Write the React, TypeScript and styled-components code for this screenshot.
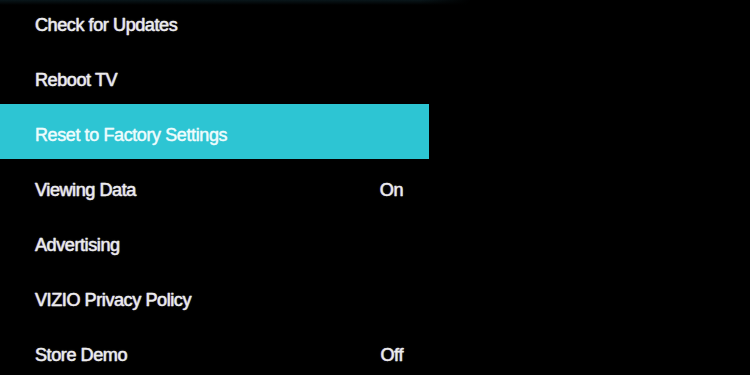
import styled, { createGlobalStyle } from 'styled-components';

const GlobalStyle = createGlobalStyle`
  html, body {
    margin: 0;
    padding: 0;
    background: #000;
  }
  body {
    width: 750px;
    height: 375px;
    overflow: hidden;
  }
`;

const Screen = styled.main`
  width: 750px;
  height: 375px;
  overflow: hidden;
  background:
    linear-gradient(90deg, rgba(0, 0, 0, 0) 0, rgba(0, 0, 0, 0) 420px, #000 470px),
    linear-gradient(180deg, #09161a 0, #000 5px);
  font-family: 'Liberation Sans', Arial, Helvetica, sans-serif;
`;

const Menu = styled.ul`
  list-style: none;
  margin: -6px 0 0;
  padding: 0;
  width: 429px;
`;

const Row = styled.li<{ $active?: boolean }>`
  box-sizing: border-box;
  height: 55px;
  padding: 7px 26px 0 35px;
  display: flex;
  align-items: center;
  justify-content: space-between;
  background: ${(p) => (p.$active ? '#2dc5d3' : 'transparent')};
  color: ${(p) => (p.$active ? '#eefcfd' : '#ededed')};
  font-size: 18px;
  line-height: 20px;
  letter-spacing: -0.4px;
  -webkit-text-stroke: 0.3px currentColor;
  text-shadow: ${(p) =>
    p.$active
      ? '0 0 1px rgba(255, 255, 255, 0.5)'
      : '-0.7px 0 rgba(255, 70, 160, 0.45), 0.7px 0 rgba(70, 240, 255, 0.45), 0 0 2px rgba(255, 255, 255, 0.25)'};
`;

const Label = styled.span`
  white-space: nowrap;
`;

const Value = styled.span`
  white-space: nowrap;
`;

type Item = { label: string; value?: string };

const items: Item[] = [
  { label: 'Check for Updates' },
  { label: 'Reboot TV' },
  { label: 'Reset to Factory Settings' },
  { label: 'Viewing Data', value: 'On' },
  { label: 'Advertising' },
  { label: 'VIZIO Privacy Policy' },
  { label: 'Store Demo', value: 'Off' },
];

const App = () => {
  const selected = 2;

  return (
    <>
      <GlobalStyle />
      <Screen>
        <Menu>
          {items.map((item, i) => (
            <Row key={item.label} $active={i === selected}>
              <Label>{item.label}</Label>
              {item.value && <Value>{item.value}</Value>}
            </Row>
          ))}
        </Menu>
      </Screen>
    </>
  );
};

export default App;
